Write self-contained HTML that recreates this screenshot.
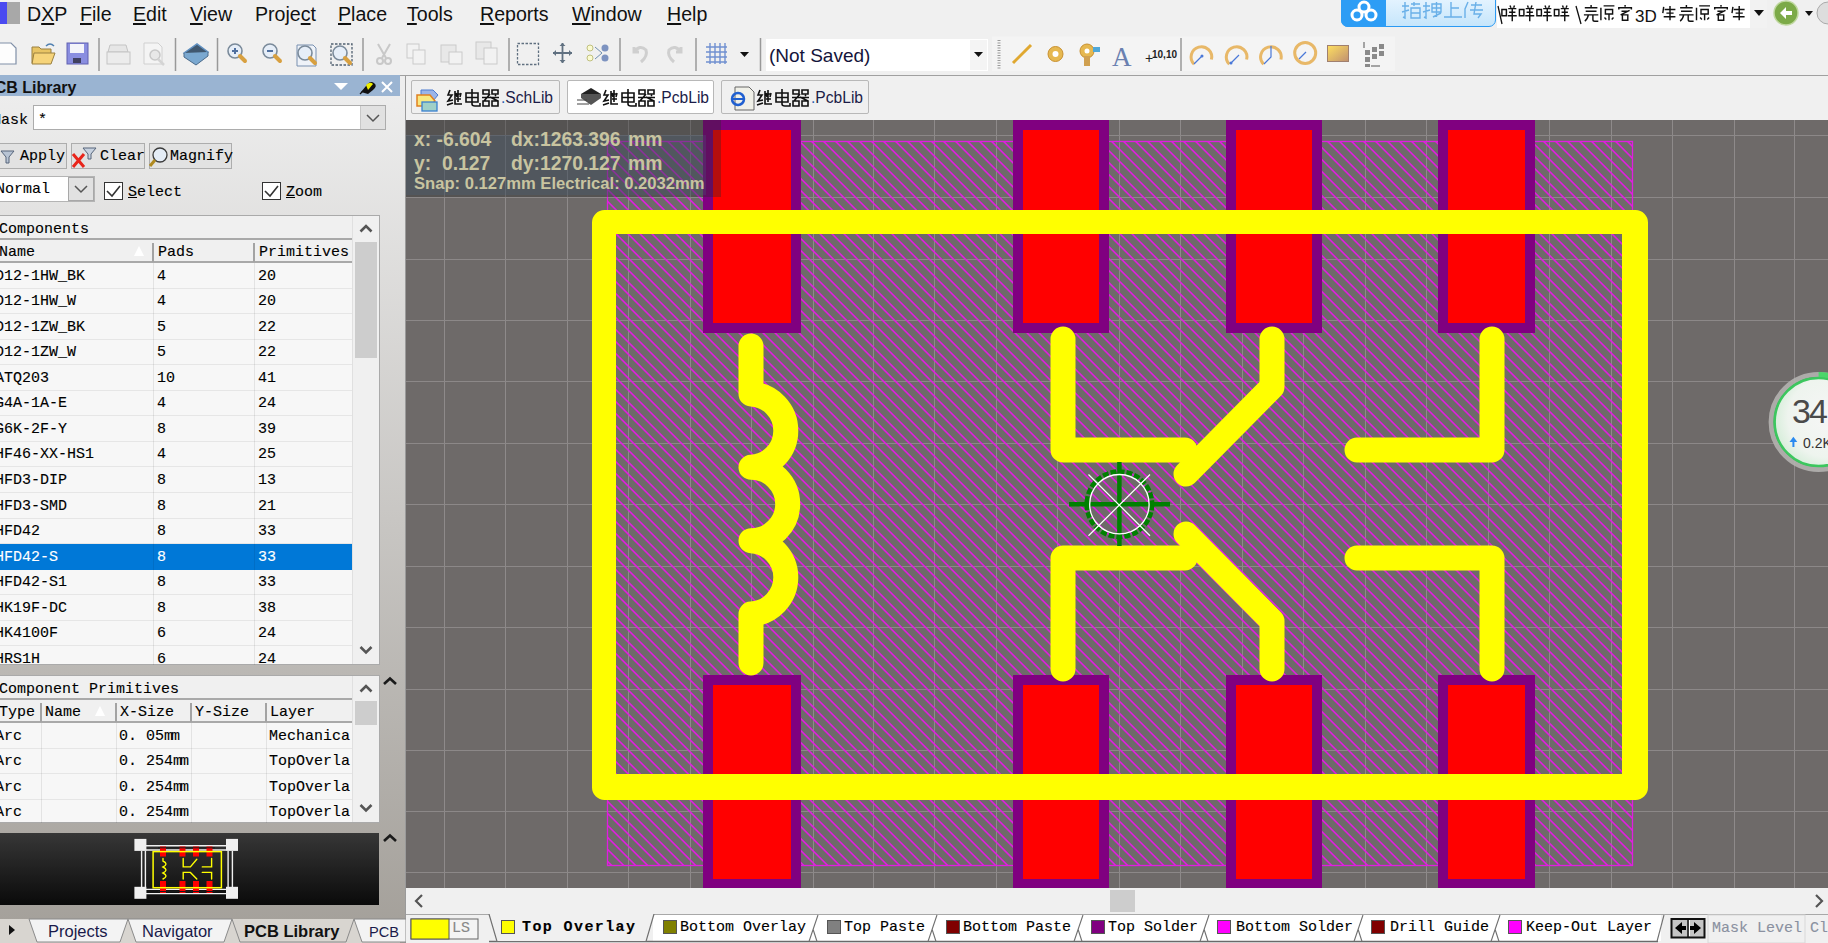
<!DOCTYPE html><html><head><meta charset="utf-8"><title>PCB</title><style>
*{box-sizing:border-box}
body{margin:0;width:1828px;height:943px;overflow:hidden;background:#f0f0f0;position:relative;font-family:"Liberation Sans",sans-serif;color:#000}
.a{position:absolute}
.m{font-family:"Liberation Mono",monospace;font-size:15px;white-space:pre;-webkit-text-stroke:0.12px currentColor}
.s{font-family:"Liberation Sans",sans-serif;white-space:pre}
u{text-decoration:none;border-bottom:1.5px solid #000;}
</style></head><body>
<div class="a" style="left:0;top:2px;width:9px;height:22px;background:#4a4af0"></div>
<div class="a" style="left:7px;top:2px;width:13px;height:22px;background:#a8a8a8"></div>
<div class="a s" style="left:27px;top:3px;font-size:19.6px;line-height:22px;color:#111">D<span style="text-decoration:underline;text-underline-offset:2px;text-decoration-thickness:1.5px">X</span>P</div>
<div class="a s" style="left:80px;top:3px;font-size:19.6px;line-height:22px;color:#111"><span style="text-decoration:underline;text-underline-offset:2px;text-decoration-thickness:1.5px">F</span>ile</div>
<div class="a s" style="left:133px;top:3px;font-size:19.6px;line-height:22px;color:#111"><span style="text-decoration:underline;text-underline-offset:2px;text-decoration-thickness:1.5px">E</span>dit</div>
<div class="a s" style="left:190px;top:3px;font-size:19.6px;line-height:22px;color:#111"><span style="text-decoration:underline;text-underline-offset:2px;text-decoration-thickness:1.5px">V</span>iew</div>
<div class="a s" style="left:255px;top:3px;font-size:19.6px;line-height:22px;color:#111">Proje<span style="text-decoration:underline;text-underline-offset:2px;text-decoration-thickness:1.5px">c</span>t</div>
<div class="a s" style="left:338px;top:3px;font-size:19.6px;line-height:22px;color:#111"><span style="text-decoration:underline;text-underline-offset:2px;text-decoration-thickness:1.5px">P</span>lace</div>
<div class="a s" style="left:407px;top:3px;font-size:19.6px;line-height:22px;color:#111"><span style="text-decoration:underline;text-underline-offset:2px;text-decoration-thickness:1.5px">T</span>ools</div>
<div class="a s" style="left:480px;top:3px;font-size:19.6px;line-height:22px;color:#111"><span style="text-decoration:underline;text-underline-offset:2px;text-decoration-thickness:1.5px">R</span>eports</div>
<div class="a s" style="left:572px;top:3px;font-size:19.6px;line-height:22px;color:#111"><span style="text-decoration:underline;text-underline-offset:2px;text-decoration-thickness:1.5px">W</span>indow</div>
<div class="a s" style="left:667px;top:3px;font-size:19.6px;line-height:22px;color:#111"><span style="text-decoration:underline;text-underline-offset:2px;text-decoration-thickness:1.5px">H</span>elp</div>
<svg class="a" style="left:406px;top:120px" width="1422" height="768" viewBox="406 120 1422 768" shape-rendering="crispEdges"><rect x="406" y="120" width="1422" height="768" fill="#6e6a69"/><rect x="444" y="120" width="1" height="768" fill="#8e8a8a"/><rect x="505" y="120" width="1" height="768" fill="#8e8a8a"/><rect x="567" y="120" width="1" height="768" fill="#8e8a8a"/><rect x="628" y="120" width="1" height="768" fill="#8e8a8a"/><rect x="690" y="120" width="1" height="768" fill="#8e8a8a"/><rect x="751" y="120" width="1" height="768" fill="#8e8a8a"/><rect x="813" y="120" width="1" height="768" fill="#8e8a8a"/><rect x="873" y="120" width="1" height="768" fill="#8e8a8a"/><rect x="934" y="120" width="1" height="768" fill="#8e8a8a"/><rect x="996" y="120" width="1" height="768" fill="#8e8a8a"/><rect x="1057" y="120" width="1" height="768" fill="#8e8a8a"/><rect x="1119" y="120" width="1" height="768" fill="#8e8a8a"/><rect x="1180" y="120" width="1" height="768" fill="#8e8a8a"/><rect x="1242" y="120" width="1" height="768" fill="#8e8a8a"/><rect x="1303" y="120" width="1" height="768" fill="#8e8a8a"/><rect x="1365" y="120" width="1" height="768" fill="#8e8a8a"/><rect x="1426" y="120" width="1" height="768" fill="#8e8a8a"/><rect x="1488" y="120" width="1" height="768" fill="#8e8a8a"/><rect x="1549" y="120" width="1" height="768" fill="#8e8a8a"/><rect x="1611" y="120" width="1" height="768" fill="#8e8a8a"/><rect x="1672" y="120" width="1" height="768" fill="#8e8a8a"/><rect x="1734" y="120" width="1" height="768" fill="#8e8a8a"/><rect x="1794" y="120" width="1" height="768" fill="#8e8a8a"/><rect x="406" y="135" width="1422" height="1" fill="#8c8888"/><rect x="406" y="197" width="1422" height="1" fill="#8c8888"/><rect x="406" y="259" width="1422" height="1" fill="#8c8888"/><rect x="406" y="320" width="1422" height="1" fill="#8c8888"/><rect x="406" y="381" width="1422" height="1" fill="#8c8888"/><rect x="406" y="443" width="1422" height="1" fill="#8c8888"/><rect x="406" y="504" width="1422" height="1" fill="#8c8888"/><rect x="406" y="566" width="1422" height="1" fill="#8c8888"/><rect x="406" y="627" width="1422" height="1" fill="#8c8888"/><rect x="406" y="689" width="1422" height="1" fill="#8c8888"/><rect x="406" y="750" width="1422" height="1" fill="#8c8888"/><rect x="406" y="811" width="1422" height="1" fill="#8c8888"/><rect x="406" y="872" width="1422" height="1" fill="#8c8888"/></svg>
<svg class="a" style="left:406px;top:120px" width="1422" height="768" viewBox="406 120 1422 768"><defs><clipPath id="hc"><rect x="607" y="141" width="1026" height="725"/></clipPath></defs><path clip-path="url(#hc)" d="M-126.80,139L602.20,868M-114.80,139L614.20,868M-102.80,139L626.20,868M-90.80,139L638.20,868M-78.80,139L650.20,868M-66.80,139L662.20,868M-54.80,139L674.20,868M-42.80,139L686.20,868M-30.80,139L698.20,868M-18.80,139L710.20,868M-6.80,139L722.20,868M5.20,139L734.20,868M17.20,139L746.20,868M29.20,139L758.20,868M41.20,139L770.20,868M53.20,139L782.20,868M65.20,139L794.20,868M77.20,139L806.20,868M89.20,139L818.20,868M101.20,139L830.20,868M113.20,139L842.20,868M125.20,139L854.20,868M137.20,139L866.20,868M149.20,139L878.20,868M161.20,139L890.20,868M173.20,139L902.20,868M185.20,139L914.20,868M197.20,139L926.20,868M209.20,139L938.20,868M221.20,139L950.20,868M233.20,139L962.20,868M245.20,139L974.20,868M257.20,139L986.20,868M269.20,139L998.20,868M281.20,139L1010.20,868M293.20,139L1022.20,868M305.20,139L1034.20,868M317.20,139L1046.20,868M329.20,139L1058.20,868M341.20,139L1070.20,868M353.20,139L1082.20,868M365.20,139L1094.20,868M377.20,139L1106.20,868M389.20,139L1118.20,868M401.20,139L1130.20,868M413.20,139L1142.20,868M425.20,139L1154.20,868M437.20,139L1166.20,868M449.20,139L1178.20,868M461.20,139L1190.20,868M473.20,139L1202.20,868M485.20,139L1214.20,868M497.20,139L1226.20,868M509.20,139L1238.20,868M521.20,139L1250.20,868M533.20,139L1262.20,868M545.20,139L1274.20,868M557.20,139L1286.20,868M569.20,139L1298.20,868M581.20,139L1310.20,868M593.20,139L1322.20,868M605.20,139L1334.20,868M617.20,139L1346.20,868M629.20,139L1358.20,868M641.20,139L1370.20,868M653.20,139L1382.20,868M665.20,139L1394.20,868M677.20,139L1406.20,868M689.20,139L1418.20,868M701.20,139L1430.20,868M713.20,139L1442.20,868M725.20,139L1454.20,868M737.20,139L1466.20,868M749.20,139L1478.20,868M761.20,139L1490.20,868M773.20,139L1502.20,868M785.20,139L1514.20,868M797.20,139L1526.20,868M809.20,139L1538.20,868M821.20,139L1550.20,868M833.20,139L1562.20,868M845.20,139L1574.20,868M857.20,139L1586.20,868M869.20,139L1598.20,868M881.20,139L1610.20,868M893.20,139L1622.20,868M905.20,139L1634.20,868M917.20,139L1646.20,868M929.20,139L1658.20,868M941.20,139L1670.20,868M953.20,139L1682.20,868M965.20,139L1694.20,868M977.20,139L1706.20,868M989.20,139L1718.20,868M1001.20,139L1730.20,868M1013.20,139L1742.20,868M1025.20,139L1754.20,868M1037.20,139L1766.20,868M1049.20,139L1778.20,868M1061.20,139L1790.20,868M1073.20,139L1802.20,868M1085.20,139L1814.20,868M1097.20,139L1826.20,868M1109.20,139L1838.20,868M1121.20,139L1850.20,868M1133.20,139L1862.20,868M1145.20,139L1874.20,868M1157.20,139L1886.20,868M1169.20,139L1898.20,868M1181.20,139L1910.20,868M1193.20,139L1922.20,868M1205.20,139L1934.20,868M1217.20,139L1946.20,868M1229.20,139L1958.20,868M1241.20,139L1970.20,868M1253.20,139L1982.20,868M1265.20,139L1994.20,868M1277.20,139L2006.20,868M1289.20,139L2018.20,868M1301.20,139L2030.20,868M1313.20,139L2042.20,868M1325.20,139L2054.20,868M1337.20,139L2066.20,868M1349.20,139L2078.20,868M1361.20,139L2090.20,868M1373.20,139L2102.20,868M1385.20,139L2114.20,868M1397.20,139L2126.20,868M1409.20,139L2138.20,868M1421.20,139L2150.20,868M1433.20,139L2162.20,868M1445.20,139L2174.20,868M1457.20,139L2186.20,868M1469.20,139L2198.20,868M1481.20,139L2210.20,868M1493.20,139L2222.20,868M1505.20,139L2234.20,868M1517.20,139L2246.20,868M1529.20,139L2258.20,868M1541.20,139L2270.20,868M1553.20,139L2282.20,868M1565.20,139L2294.20,868M1577.20,139L2306.20,868M1589.20,139L2318.20,868M1601.20,139L2330.20,868M1613.20,139L2342.20,868M1625.20,139L2354.20,868M1637.20,139L2366.20,868" stroke="#e01ee0" stroke-width="1.6" fill="none"/><rect x="607.5" y="141.5" width="1025" height="724" fill="none" stroke="#e01ee0" stroke-width="1.3"/><rect x="703" y="120" width="98" height="213" fill="#800080"/><rect x="713" y="130" width="78" height="193" fill="#ff0000"/><rect x="703" y="675" width="98" height="214" fill="#800080"/><rect x="713" y="685" width="78" height="194" fill="#ff0000"/><rect x="1013" y="120" width="96" height="213" fill="#800080"/><rect x="1023" y="130" width="76" height="193" fill="#ff0000"/><rect x="1013" y="675" width="96" height="214" fill="#800080"/><rect x="1023" y="685" width="76" height="194" fill="#ff0000"/><rect x="1226" y="120" width="96" height="213" fill="#800080"/><rect x="1236" y="130" width="76" height="193" fill="#ff0000"/><rect x="1226" y="675" width="96" height="214" fill="#800080"/><rect x="1236" y="685" width="76" height="194" fill="#ff0000"/><rect x="1438" y="120" width="97" height="213" fill="#800080"/><rect x="1448" y="130" width="77" height="193" fill="#ff0000"/><rect x="1438" y="675" width="97" height="214" fill="#800080"/><rect x="1448" y="685" width="77" height="194" fill="#ff0000"/><path fill-rule="evenodd" fill="#ffff00" d="M604.5,210H1635.5A12.5,12.5 0 0 1 1648,222.5V787.5A12.5,12.5 0 0 1 1635.5,800H604.5A12.5,12.5 0 0 1 592,787.5V222.5A12.5,12.5 0 0 1 604.5,210ZM616,234H1622V774H616Z"/><path d="M751,346V394A36.7,36.7 0 0 1 751,467.3A36.7,36.7 0 0 1 751,540.7A36.7,36.7 0 0 1 751,614V663" stroke="#ffff00" stroke-width="25" fill="none" stroke-linecap="round" stroke-linejoin="round"/><path d="M1063,339V450H1185" stroke="#ffff00" stroke-width="25" fill="none" stroke-linecap="round" stroke-linejoin="round"/><path d="M1272,339V387L1186,474" stroke="#ffff00" stroke-width="25" fill="none" stroke-linecap="round" stroke-linejoin="round"/><path d="M1063,669V558H1185" stroke="#ffff00" stroke-width="25" fill="none" stroke-linecap="round" stroke-linejoin="round"/><path d="M1272,669V621L1186,534" stroke="#ffff00" stroke-width="25" fill="none" stroke-linecap="round" stroke-linejoin="round"/><path d="M1492,339V450H1357" stroke="#ffff00" stroke-width="25" fill="none" stroke-linecap="round" stroke-linejoin="round"/><path d="M1492,669V558H1357" stroke="#ffff00" stroke-width="25" fill="none" stroke-linecap="round" stroke-linejoin="round"/><circle cx="1119.4" cy="504.2" r="32.5" stroke="#008000" stroke-width="5" fill="none" stroke-dasharray="6 2"/><path d="M1069,504.2H1170M1119.4,462V546" stroke="#008000" stroke-width="4.5"/><circle cx="1119.4" cy="504.2" r="29.7" stroke="#ffffff" stroke-width="1.3" fill="none"/><path d="M1088.5,474.5L1150,535.7M1150,474.5L1088.5,535.7" stroke="#ffffff" stroke-width="1.2"/></svg>
<svg class="a" style="left:1760px;top:364px" width="68" height="116"><defs><radialGradient id="wg" cx="0.6" cy="0.45" r="0.6"><stop offset="0" stop-color="#f6f6f6"/><stop offset="0.75" stop-color="#eef4ee"/><stop offset="1" stop-color="#d8eedb"/></radialGradient></defs><circle cx="58.6" cy="58" r="47.5" fill="none" stroke="#b4b2b0" stroke-width="5" opacity="0.9"/><circle cx="58.6" cy="58" r="44" fill="url(#wg)" stroke="#3cc75e" stroke-width="2.6"/><path d="M58.6,10.5A47.5,47.5 0 0 1 70,11.8" stroke="#4bd66a" stroke-width="5" fill="none"/><text x="32" y="58.5" font-family="Liberation Sans" font-size="34" fill="#4a4a4a" letter-spacing="-2">34</text><path d="M33.4,83V77" stroke="#2a8af0" stroke-width="2"/><path d="M29.5,78L33.4,72.8L37.3,78Z" fill="#2a8af0"/><text x="43" y="84" font-family="Liberation Sans" font-size="14" fill="#333">0.2K</text></svg>
<div class="a" style="left:406px;top:120px;width:315px;height:77px;background:rgba(40,40,40,0.35)"></div>
<div class="a" style="left:406px;top:135px;width:300px;height:60px;background:rgba(70,100,130,0.25)"></div>
<div class="a s" style="left:414px;top:127px;font-size:21px;line-height:24px;color:#c8c4a0;font-weight:bold;transform:scaleX(0.92);transform-origin:0 0">x: -6.604</div>
<div class="a s" style="left:511px;top:127px;font-size:21px;line-height:24px;color:#c8c4a0;font-weight:bold;transform:scaleX(0.92);transform-origin:0 0">dx:1263.396</div>
<div class="a s" style="left:628px;top:127px;font-size:21px;line-height:24px;color:#c8c4a0;font-weight:bold;transform:scaleX(0.92);transform-origin:0 0">mm</div>
<div class="a s" style="left:414px;top:151px;font-size:21px;line-height:24px;color:#c8c4a0;font-weight:bold;transform:scaleX(0.92);transform-origin:0 0">y:  0.127</div>
<div class="a s" style="left:511px;top:151px;font-size:21px;line-height:24px;color:#c8c4a0;font-weight:bold;transform:scaleX(0.92);transform-origin:0 0">dy:1270.127</div>
<div class="a s" style="left:628px;top:151px;font-size:21px;line-height:24px;color:#c8c4a0;font-weight:bold;transform:scaleX(0.92);transform-origin:0 0">mm</div>
<div class="a s" style="left:414px;top:174px;font-size:16.6px;line-height:19px;color:#c8c4a0;font-weight:bold;">Snap: 0.127mm Electrical: 0.2032mm</div>
<svg class="a" style="left:0;top:34px" width="1400" height="42" viewBox="0 34 1400 42"><rect x="992" y="36.5" width="403" height="34.5" fill="#f4f4f4"/><rect x="98.25" y="38" width="1.5" height="33" fill="#999999"/><rect x="174.75" y="38" width="1.5" height="33" fill="#999999"/><rect x="216.75" y="38" width="1.5" height="33" fill="#999999"/><rect x="362.25" y="38" width="1.5" height="33" fill="#999999"/><rect x="508.25" y="38" width="1.5" height="33" fill="#999999"/><rect x="619.25" y="38" width="1.5" height="33" fill="#999999"/><rect x="695.25" y="38" width="1.5" height="33" fill="#999999"/><rect x="759.75" y="38" width="1.5" height="33" fill="#999999"/><rect x="1180.25" y="38" width="1.5" height="33" fill="#999999"/><path d="M999,40V70" stroke="#9a9a9a" stroke-width="3" stroke-dasharray="1 1.5"/><path d="M-2,43H11L16,48V64H-2Z" fill="#fdfdfd" stroke="#8090a8" stroke-width="1.2"/><path d="M32,47H39L41,49H51V63H32Z" fill="#e8c464" stroke="#9a8040" stroke-width="1"/><path d="M34,53H55L51,64H32Z" fill="#f6d47a" stroke="#9a8040" stroke-width="1"/><path d="M46,46Q50,42 54,46" stroke="#5080b0" stroke-width="1.5" fill="none"/><rect x="67" y="43" width="21" height="21" fill="#8a8ee0" stroke="#6060b0" stroke-width="1"/><rect x="70" y="44" width="14" height="9" fill="#f4f4fa"/><rect x="73" y="58" width="8" height="5" fill="#404060"/><path d="M110,45H126L128,52H108Z" fill="#e6e6e6" stroke="#c4c4c4"/><rect x="107" y="52" width="23" height="12" fill="#ececec" stroke="#c4c4c4"/><path d="M144,43H158L162,47V64H144Z" fill="#f4f4f4" stroke="#d0d0d0"/><circle cx="155" cy="55" r="5" fill="#e8e8e8" stroke="#c8c8c8" stroke-width="1.5"/><path d="M158,59L164,65" stroke="#d4d4d4" stroke-width="2.5"/><path d="M184,53L197,44L208,52L196,62Z" fill="#405870" stroke="#6090c0" stroke-width="1.5"/><path d="M184,53V57L196,65L208,56V52" fill="#7aa8d0" stroke="#4a6a8a" stroke-width="1"/><circle cx="235" cy="51" r="7" fill="#e6eef8" stroke="#7a8a9a" stroke-width="1.6"/><path d="M240,56L245,61" stroke="#d8a040" stroke-width="4" stroke-linecap="round"/><path d="M232,51H238M235,48V54" stroke="#5070a0" stroke-width="2"/><circle cx="270" cy="51" r="7" fill="#e6eef8" stroke="#7a8a9a" stroke-width="1.6"/><path d="M275,56L280,61" stroke="#d8a040" stroke-width="4" stroke-linecap="round"/><path d="M267,51H273" stroke="#5070a0" stroke-width="2"/><path d="M297,45H313L316,48V66H297Z" fill="#eef2f8" stroke="#7890b0" stroke-width="1"/><circle cx="305" cy="53" r="7" fill="#e6eef8" stroke="#7a8a9a" stroke-width="1.6"/><path d="M310,58L315,63" stroke="#d8a040" stroke-width="4" stroke-linecap="round"/><rect x="331" y="44" width="21" height="21" fill="none" stroke="#506070" stroke-width="1.3" stroke-dasharray="2.5 1.5"/><circle cx="340" cy="53" r="7" fill="#e6eef8" stroke="#7a8a9a" stroke-width="1.6"/><path d="M345,58L350,63" stroke="#d8a040" stroke-width="4" stroke-linecap="round"/><path d="M378,44L386,58M390,44L382,58" stroke="#c8c8c8" stroke-width="2"/><circle cx="380" cy="61" r="3" fill="none" stroke="#c8c8c8" stroke-width="2"/><circle cx="388" cy="61" r="3" fill="none" stroke="#c8c8c8" stroke-width="2"/><rect x="407" y="44" width="12" height="14" fill="#f2f2f2" stroke="#cacaca"/><rect x="413" y="50" width="12" height="14" fill="#f2f2f2" stroke="#cacaca"/><rect x="441" y="45" width="15" height="17" fill="#e8e8e8" stroke="#cacaca"/><rect x="449" y="52" width="13" height="12" fill="#f2f2f2" stroke="#cacaca"/><rect x="476" y="42" width="15" height="17" fill="#e8e8e8" stroke="#cacaca"/><rect x="484" y="48" width="13" height="16" fill="#f2f2f2" stroke="#cacaca"/><rect x="517.5" y="43.5" width="21" height="21" fill="none" stroke="#607080" stroke-width="1.3" stroke-dasharray="2.5 1.5"/><path d="M553,53H572M562.5,43V63" stroke="#607080" stroke-width="1.8"/><path d="M553,53L556,50V56ZM572,53L569,50V56ZM562.5,43L559.5,46H565.5ZM562.5,63L559.5,60H565.5Z" fill="#607080"/><path d="M595,47L602,53L595,59" stroke="#7090b0" stroke-width="1" fill="none"/><circle cx="590" cy="48" r="3" fill="#fafad0" stroke="#c0c080"/><circle cx="590" cy="58" r="3" fill="#fafad0" stroke="#c0c080"/><circle cx="605" cy="48" r="3.5" fill="#7d93c0"/><circle cx="605" cy="58" r="3.5" fill="#7d93c0"/><path d="M634,47V52H639M634,52Q640,44 646,50Q648,56 641,62" stroke="#cfcfcf" stroke-width="3" fill="none"/><path d="M681,47V52H676M681,52Q675,44 669,50Q667,56 674,62" stroke="#cfcfcf" stroke-width="3" fill="none"/><path d="M706,47H727M706,52H727M706,57H727M706,62H727M710,43V64M715,43V64M720,43V64M725,43V64" stroke="#7090d0" stroke-width="1.4"/><path d="M740,52H749L744.5,57Z" fill="#111"/><rect x="766" y="39" width="222" height="32" fill="#fff"/><rect x="970" y="40" width="17" height="30" fill="#f4f4f4"/><path d="M974,52H983L978.5,57Z" fill="#111"/><path d="M1013,63L1031,45" stroke="#e0a830" stroke-width="3"/><circle cx="1055.5" cy="54" r="7.5" fill="#e6b850" stroke="#c89030" stroke-width="1"/><circle cx="1055.5" cy="54" r="3" fill="#fff"/><circle cx="1087" cy="51" r="7" fill="#e6b850" stroke="#c89030" stroke-width="1"/><circle cx="1087" cy="51" r="2.5" fill="#fff"/><rect x="1084" y="56" width="6" height="10" fill="#d0a050"/><rect x="1093" y="47" width="7" height="5" fill="#50a8d8"/><text x="1112" y="66" font-family="Liberation Serif" font-size="27" fill="#6a80b0">A</text><text x="1145" y="63" font-family="Liberation Sans" font-size="14" fill="#222">+</text><text x="1152" y="58" font-family="Liberation Sans" font-size="10" font-weight="bold" fill="#222">10,10</text><path d="M1194.1000000000001,64.3A10.3,10.3 0 1 1 1211.4,59.5" stroke="#e8b868" stroke-width="3" fill="none"/><path d="M1229.3,64.3A10.3,10.3 0 1 1 1246.6,59.5" stroke="#e8b868" stroke-width="3" fill="none"/><path d="M1263.6000000000001,64.3A10.3,10.3 0 1 1 1280.9,59.5" stroke="#e8b868" stroke-width="3" fill="none"/><path d="M1194,64L1202,56M1231,63L1239,55M1264,64L1271,57V46" stroke="#4a78d8" stroke-width="1.2" fill="none"/><circle cx="1202" cy="56" r="1.5" fill="#4a78d8"/><circle cx="1231" cy="63" r="1.5" fill="#4a78d8"/><circle cx="1305.2" cy="53" r="10.5" stroke="#e8b868" stroke-width="3" fill="none"/><path d="M1299,59L1306,52" stroke="#4a78d8" stroke-width="1.2"/><defs><linearGradient id="rg" x1="0" y1="0" x2="1" y2="1"><stop offset="0" stop-color="#ffe060"/><stop offset="1" stop-color="#c09070"/></linearGradient></defs><rect x="1327.5" y="45.5" width="21" height="16" fill="url(#rg)" stroke="#a08070" stroke-width="1"/><g fill="#8a8a8a"><rect x="1365" y="50" width="5" height="5"/><rect x="1372" y="47" width="5" height="5"/><rect x="1379" y="44" width="5" height="5"/><rect x="1365" y="57" width="5" height="5"/><rect x="1372" y="54" width="5" height="5"/><rect x="1379" y="51" width="5" height="5"/><rect x="1365" y="64" width="5" height="3"/></g><path d="M1364,42V48M1371,66H1380" stroke="#555" stroke-width="1"/></svg>
<div class="a s" style="left:769px;top:45px;font-size:19px;line-height:22px;color:#14143a">(Not Saved)</div>
<div class="a" style="left:411px;top:80px;width:149px;height:34px;background:#f0f0f0;border:1px solid #b8b8b8;border-radius:2px"></div>
<div class="a" style="left:567px;top:80px;width:147px;height:34px;background:#ffffff;border:1px solid #b8b8b8;border-radius:2px"></div>
<div class="a" style="left:721px;top:80px;width:148px;height:34px;background:#f0f0f0;border:1px solid #b8b8b8;border-radius:2px"></div>
<svg class="a" style="left:411px;top:80px" width="460" height="34"><path d="M10,10H22L27,15L22,21H10Z" fill="#9ab4e8" stroke="#4a7ad0"/><path d="M6,15H19L24,21L19,26H6Z" fill="#f8e880" stroke="#e08020" stroke-width="1.5"/><rect x="11" y="22" width="15" height="9" fill="#a0d0c8" stroke="#3a80d0" stroke-width="1.3"/><path d="M170,14L180,8L190,14L180,20Z" fill="#222"/><path d="M170,14V18L180,25L190,18V14" fill="#555"/><path d="M166,20H176M166,24H178" stroke="#444" stroke-width="1"/><path d="M324,7H338L343,12V30H324Z" fill="#f0f0e8" stroke="#666"/><circle cx="327" cy="19" r="6" fill="none" stroke="#2060d0" stroke-width="2.5"/><path d="M320,19H334" stroke="#2060d0" stroke-width="2"/></svg>
<svg class="a" style="left:440px;top:88px" width="440" height="22"><g transform="translate(7,1) scale(1.0)" stroke="#111" stroke-width="1.6" fill="none"><path d="M3,1L1,6L5,6L1,12L6,11M0,16L6,14M8,2V15H15M9,5L14,5M11,1V13M9,10L14,10M9,4L10,8M14,4L13,8"/><path d="M19,4H31V13H19ZM19,8.5H31M25,0V15Q25,17 28,17H33V14"/><path d="M36,1H42V5H36ZM45,1H51V5H45ZM36,12H42V17H36ZM45,12H51V17H45ZM35,8.5H52M43,5L37,12M43,8L51,12M48,6L49,7"/></g><g transform="translate(163,1) scale(1.0)" stroke="#111" stroke-width="1.6" fill="none"><path d="M3,1L1,6L5,6L1,12L6,11M0,16L6,14M8,2V15H15M9,5L14,5M11,1V13M9,10L14,10M9,4L10,8M14,4L13,8"/><path d="M19,4H31V13H19ZM19,8.5H31M25,0V15Q25,17 28,17H33V14"/><path d="M36,1H42V5H36ZM45,1H51V5H45ZM36,12H42V17H36ZM45,12H51V17H45ZM35,8.5H52M43,5L37,12M43,8L51,12M48,6L49,7"/></g><g transform="translate(317,1) scale(1.0)" stroke="#111" stroke-width="1.6" fill="none"><path d="M3,1L1,6L5,6L1,12L6,11M0,16L6,14M8,2V15H15M9,5L14,5M11,1V13M9,10L14,10M9,4L10,8M14,4L13,8"/><path d="M19,4H31V13H19ZM19,8.5H31M25,0V15Q25,17 28,17H33V14"/><path d="M36,1H42V5H36ZM45,1H51V5H45ZM36,12H42V17H36ZM45,12H51V17H45ZM35,8.5H52M43,5L37,12M43,8L51,12M48,6L49,7"/></g></svg>
<div class="a s" style="left:501px;top:88px;font-size:15.6px;line-height:20px;color:#1c1c48"><span style="color:#2a5db0">.</span>SchLib</div>
<div class="a s" style="left:657px;top:88px;font-size:15.6px;line-height:20px;color:#1c1c48"><span style="color:#2a5db0">.</span>PcbLib</div>
<div class="a s" style="left:811px;top:88px;font-size:15.6px;line-height:20px;color:#1c1c48"><span style="color:#2a5db0">.</span>PcbLib</div>
<div class="a" style="left:1497px;top:0;width:270px;height:28px;background:#fff"></div>
<div class="a" style="left:1341px;top:-4px;width:155px;height:31px;background:linear-gradient(#e6f4ff,#c6e6fb);border:1.5px solid #2b9af3;border-radius:0 0 7px 7px"></div>
<div class="a" style="left:1341px;top:-4px;width:45px;height:31px;background:#2d9df5;border-radius:0 0 0 7px"></div>
<svg class="a" style="left:1346px;top:0" width="36" height="24"><circle cx="18" cy="7" r="5" fill="none" stroke="#fff" stroke-width="3"/><circle cx="11" cy="15" r="5" fill="none" stroke="#fff" stroke-width="3"/><circle cx="25" cy="15" r="5" fill="none" stroke="#fff" stroke-width="3"/></svg>
<svg class="a" style="left:1400px;top:0" width="90" height="24"><g stroke="#6ab0e8" stroke-width="1.4" fill="none"><path d="M2,6H9M5,2V18L3,17M2,12L9,10M11,4H20M14,2V6M11,8H20V18H11ZM11,13H20"/><path d="M23,6H30M26,2V18L24,17M23,12L30,10M32,4H41V12H32ZM36.5,2V17M32,8H41M33,17L41,13"/><path d="M51,2V17M51,8H59M44,17H62"/><path d="M68,2L65,9V18M71,5H82M70,10H83M76,2L74,14H81L78,18"/></g></svg>
<div class="a" style="left:1750px;top:0;width:17px;height:28px;background:#f2f2f2"></div>
<svg class="a" style="left:1497px;top:0" width="270" height="28" viewBox="1497 0 270 28"><path d="M1498,6L1502,24M1576,6L1581,24" stroke="#111" stroke-width="1.3"/><g transform="translate(1501.0,5) scale(0.9)" stroke="#111" stroke-width="1.6" fill="none"><path d="M1,5H6V12H1ZM8,4H17M9,8H16M7.5,12H17.5M12.5,3V18M10,0.5L11,3M15,0.5L14,3"/></g><g transform="translate(1518.5,5) scale(0.9)" stroke="#111" stroke-width="1.6" fill="none"><path d="M1,5H6V12H1ZM8,4H17M9,8H16M7.5,12H17.5M12.5,3V18M10,0.5L11,3M15,0.5L14,3"/></g><g transform="translate(1536.0,5) scale(0.9)" stroke="#111" stroke-width="1.6" fill="none"><path d="M1,5H6V12H1ZM8,4H17M9,8H16M7.5,12H17.5M12.5,3V18M10,0.5L11,3M15,0.5L14,3"/></g><g transform="translate(1553.5,5) scale(0.9)" stroke="#111" stroke-width="1.6" fill="none"><path d="M1,5H6V12H1ZM8,4H17M9,8H16M7.5,12H17.5M12.5,3V18M10,0.5L11,3M15,0.5L14,3"/></g><g transform="translate(1583,5) scale(0.9)" stroke="#111" stroke-width="1.6" fill="none"><path d="M2,3H16M9,0V3M3,7H15M1,11H17M6,11Q5,16 2,18M11,11V16Q11,18 13,18H17"/></g><g transform="translate(1600,5) scale(0.9)" stroke="#111" stroke-width="1.6" fill="none"><path d="M1,3V17M4,1H16M6,5H14V10H6ZM10,10V17M5,14L7,16M15,14L13,16"/></g><g transform="translate(1617,5) scale(0.9)" stroke="#111" stroke-width="1.6" fill="none"><path d="M9,0V2M2,5V3H16V5M5,7H13M4,11L14,6M6,11H12V17H6Z"/></g><text x="1635" y="22" font-family="Liberation Sans" font-size="17" fill="#111">3D</text><g transform="translate(1661.0,5) scale(0.9)" stroke="#111" stroke-width="1.6" fill="none"><path d="M3,2L2,9M4,5H16M6,9H14M10,1V17M3,13H16"/></g><g transform="translate(1678.3,5) scale(0.9)" stroke="#111" stroke-width="1.6" fill="none"><path d="M2,3H16M9,0V3M3,7H15M1,11H17M6,11Q5,16 2,18M11,11V16Q11,18 13,18H17"/></g><g transform="translate(1695.6,5) scale(0.9)" stroke="#111" stroke-width="1.6" fill="none"><path d="M1,3V17M4,1H16M6,5H14V10H6ZM10,10V17M5,14L7,16M15,14L13,16"/></g><g transform="translate(1712.9,5) scale(0.9)" stroke="#111" stroke-width="1.6" fill="none"><path d="M9,0V2M2,5V3H16V5M5,7H13M4,11L14,6M6,11H12V17H6Z"/></g><g transform="translate(1730.2,5) scale(0.9)" stroke="#111" stroke-width="1.6" fill="none"><path d="M3,2L2,9M4,5H16M6,9H14M10,1V17M3,13H16"/></g><path d="M1754,10H1764L1759,16Z" fill="#111"/></svg>
<svg class="a" style="left:1768px;top:0" width="60" height="28"><circle cx="18" cy="13" r="12" fill="#7caa48" stroke="#c0d8a0" stroke-width="1.5"/><path d="M12,13L18,7V11H24V15H18V19Z" fill="#fff"/><path d="M37,11H45L41,16Z" fill="#111"/><circle cx="60" cy="13" r="11" fill="#ddd" stroke="#aaa"/></svg>
<div class="a" style="left:406px;top:888px;width:1422px;height:26px;background:#f0f0f0"></div>
<svg class="a" style="left:410px;top:892px" width="20" height="18"><path d="M12,3L6,9L12,15" stroke="#555" stroke-width="2.2" fill="none"/></svg>
<svg class="a" style="left:1808px;top:892px" width="20" height="18"><path d="M8,3L14,9L8,15" stroke="#555" stroke-width="2.2" fill="none"/></svg>
<div class="a" style="left:1110px;top:890px;width:25px;height:22px;background:#cdcdcd"></div>
<div class="a" style="left:406px;top:914px;width:1422px;height:29px;background:#f0f0f0"></div>
<svg class="a" style="left:406px;top:914px" width="1422" height="29" viewBox="406 914 1422 29"><rect x="653" y="915" width="1008" height="26" fill="#ffffff"/><path d="M406,914.5H489M653,914.5H1828" stroke="#a8a8a8" stroke-width="1"/><path d="M489,941.5H1658" stroke="#6a6a6a" stroke-width="1.5"/><path d="M489,914L497,941.5H646L654,914" fill="#f0f0f0" stroke="#707070" stroke-width="1.2"/><path d="M809,941.5L818,915M813,929L817,941.5" stroke="#707070" stroke-width="1.1" fill="none"/><path d="M928,941.5L937,915M932,929L936,941.5" stroke="#707070" stroke-width="1.1" fill="none"/><path d="M1074,941.5L1083,915M1078,929L1082,941.5" stroke="#707070" stroke-width="1.1" fill="none"/><path d="M1200,941.5L1209,915M1204,929L1208,941.5" stroke="#707070" stroke-width="1.1" fill="none"/><path d="M1354,941.5L1363,915M1358,929L1362,941.5" stroke="#707070" stroke-width="1.1" fill="none"/><path d="M1491,941.5L1500,915M1495,929L1499,941.5" stroke="#707070" stroke-width="1.1" fill="none"/><path d="M1657,941.5L1664,915" stroke="#707070" stroke-width="1.1" fill="none"/><rect x="411" y="919" width="67" height="20" fill="#f4f4f4" stroke="#666" stroke-width="1"/><rect x="411" y="919" width="38" height="20" fill="#ffff00" stroke="#555" stroke-width="1"/><rect x="501.5" y="920.5" width="13" height="13" fill="#ffff00" stroke="#555" stroke-width="1"/><rect x="663.5" y="920.5" width="13" height="13" fill="#808000" stroke="#555" stroke-width="1"/><rect x="827.5" y="920.5" width="13" height="13" fill="#808080" stroke="#555" stroke-width="1"/><rect x="946.5" y="920.5" width="13" height="13" fill="#800000" stroke="#555" stroke-width="1"/><rect x="1091.5" y="920.5" width="13" height="13" fill="#800080" stroke="#555" stroke-width="1"/><rect x="1217.5" y="920.5" width="13" height="13" fill="#ff00ff" stroke="#555" stroke-width="1"/><rect x="1371.5" y="920.5" width="13" height="13" fill="#800000" stroke="#555" stroke-width="1"/><rect x="1508.5" y="920.5" width="13" height="13" fill="#ff00ff" stroke="#555" stroke-width="1"/><rect x="1708" y="915" width="97" height="28" fill="#f0f0f0" stroke="#d8d8d8" stroke-width="1"/><rect x="1671.5" y="919" width="33" height="18.5" fill="#c4c4c4" stroke="#111" stroke-width="2"/><path d="M1688,919V937" stroke="#111" stroke-width="1.5"/><path d="M1689.5,920V936" stroke="#fff" stroke-width="1"/><path d="M1675,928L1682,922V926H1686V930H1682V934ZM1701,928L1694,922V926H1690V930H1694V934Z" fill="#000"/></svg>
<div class="a m" style="left:452px;top:920px;line-height:17px;color:#888">LS</div>
<div class="a m" style="left:522px;top:919px;line-height:17px;font-weight:bold;letter-spacing:1.4px">Top Overlay</div>
<div class="a m" style="left:680px;top:919px;line-height:17px">Bottom Overlay</div>
<div class="a m" style="left:844px;top:919px;line-height:17px">Top Paste</div>
<div class="a m" style="left:963px;top:919px;line-height:17px">Bottom Paste</div>
<div class="a m" style="left:1108px;top:919px;line-height:17px">Top Solder</div>
<div class="a m" style="left:1236px;top:919px;line-height:17px">Bottom Solder</div>
<div class="a m" style="left:1390px;top:919px;line-height:17px">Drill Guide</div>
<div class="a m" style="left:1526px;top:919px;line-height:17px">Keep-Out Layer</div>
<div class="a m" style="left:1712px;top:920px;line-height:17px;color:#8a90a0">Mask Level</div>
<div class="a m" style="left:1810px;top:920px;line-height:17px;color:#8a90a0">Cl</div>
<div class="a" style="left:400px;top:75px;width:1428px;height:1px;background:#a0a0a0"></div>
<div class="a" style="left:0;top:96px;width:405px;height:847px;background:linear-gradient(#ededed,#a39f99)"></div>
<div class="a" style="left:400px;top:76px;width:5px;height:20px;background:#eeeeee"></div>
<div class="a" style="left:405px;top:76px;width:1px;height:867px;background:#9a9a9a"></div>
<div class="a" style="left:0;top:75px;width:400px;height:21px;background:#9ab4d2"></div>
<div class="a s" style="left:-16px;top:78px;font-size:16px;font-weight:bold;line-height:20px;color:#111">PCB Library</div>
<svg class="a" style="left:330px;top:79px" width="70" height="16"><path d="M4,4H18L11,11Z" fill="#fff"/><path d="M31,13L36,7Q40,1 44,4Q48,7 43,11L38,15Z" fill="#111"/><path d="M36,6Q40,2 43,5L38,11Z" fill="#ee0"/><path d="M30,15L33,12" stroke="#111" stroke-width="1.2"/><path d="M52,3L62,13M62,3L52,13" stroke="#fff" stroke-width="2"/></svg>
<div class="a m" style="left:-8px;top:112px;line-height:17px">Mask</div>
<div class="a" style="left:33px;top:105px;width:353px;height:25px;background:#fff;border:1px solid #acacac"></div>
<div class="a" style="left:360px;top:106px;width:25px;height:23px;background:#e1e1e1;border-left:1px solid #c8c8c8"></div>
<svg class="a" style="left:365px;top:113px" width="16" height="10"><path d="M2,2L8,8L14,2" stroke="#555" stroke-width="1.5" fill="none"/></svg>
<div class="a m" style="left:38px;top:112px;line-height:17px">*</div>
<div class="a" style="left:-4px;top:143px;width:71px;height:26px;background:#e2e2e2;border:1px solid #adadad"></div>
<div class="a m" style="left:20px;top:148px;line-height:17px">Apply</div>
<div class="a" style="left:71px;top:143px;width:74px;height:26px;background:#e2e2e2;border:1px solid #adadad"></div>
<div class="a m" style="left:100px;top:148px;line-height:17px">Clear</div>
<div class="a" style="left:149px;top:143px;width:83px;height:26px;background:#e2e2e2;border:1px solid #adadad"></div>
<div class="a m" style="left:170px;top:148px;line-height:17px">Magnify</div>
<svg class="a" style="left:0;top:145px" width="240" height="24"><path d="M1,6H14L9,12V18H6V12Z" fill="#b8c4d4" stroke="#56657a" stroke-width="1"/><path d="M73,9L84,22M84,9L73,22" stroke="#e8251b" stroke-width="3"/><path d="M83,3H96L91,9V14H88V9Z" fill="#c8d2e0" stroke="#56657a" stroke-width="1"/><circle cx="160" cy="10" r="7" fill="#e4ecf6" stroke="#3a3a3a" stroke-width="1.3"/><path d="M155,15L150,21" stroke="#b08a20" stroke-width="3"/></svg>
<div class="a" style="left:-2px;top:176px;width:97px;height:26px;background:#fff;border:1px solid #b4b4b4"></div>
<div class="a" style="left:68px;top:177px;width:26px;height:24px;background:#e1e1e1;border:1px solid #a8a8a8"></div>
<svg class="a" style="left:73px;top:184px" width="16" height="10"><path d="M2,2L8,8L14,2" stroke="#555" stroke-width="1.5" fill="none"/></svg>
<div class="a m" style="left:-4px;top:181px;line-height:17px">Normal</div>
<div class="a" style="left:104px;top:182px;width:19px;height:18px;background:#fff;border:1.5px solid #333"></div>
<svg class="a" style="left:104px;top:182px" width="19" height="18"><path d="M3,9L8,14L16,4" stroke="#333" stroke-width="1.6" fill="none"/></svg>
<div class="a m" style="left:128px;top:184px;line-height:17px"><span style="text-decoration:underline">S</span>elect</div>
<div class="a" style="left:262px;top:182px;width:19px;height:18px;background:#fff;border:1.5px solid #333"></div>
<svg class="a" style="left:262px;top:182px" width="19" height="18"><path d="M3,9L8,14L16,4" stroke="#333" stroke-width="1.6" fill="none"/></svg>
<div class="a m" style="left:286px;top:184px;line-height:17px"><span style="text-decoration:underline">Z</span>oom</div>
<div class="a" style="left:-2px;top:215px;width:382px;height:450px;background:#f7f7f7;border:1px solid #aaaaaa"></div>
<div class="a" style="left:-2px;top:216px;width:355px;height:24px;background:#f0f0f0;border-bottom:2px solid #a9a9a9"></div>
<div class="a m" style="left:-1px;top:221px;line-height:17px">Components</div>
<div class="a" style="left:-2px;top:240px;width:355px;height:23px;background:#f0f0f0;border-bottom:2px solid #a9a9a9"></div>
<div class="a m" style="left:-1px;top:244px;line-height:17px">Name</div>
<div class="a" style="left:152px;top:243px;width:2px;height:19px;background:#a3a3a3"></div>
<div class="a m" style="left:158px;top:244px;line-height:17px">Pads</div>
<div class="a" style="left:253px;top:243px;width:2px;height:19px;background:#a3a3a3"></div>
<div class="a m" style="left:259px;top:244px;line-height:17px">Primitives</div>
<div class="a" style="left:-2px;top:287.6px;width:355px;height:1px;background:#e6e6e6"></div>
<div class="a m" style="left:-5px;top:267.5px;line-height:17px;color:#000">D12-1HW_BK</div>
<div class="a m" style="left:157px;top:267.5px;line-height:17px;color:#000">4</div>
<div class="a m" style="left:258px;top:267.5px;line-height:17px;color:#000">20</div>
<div class="a" style="left:-2px;top:313.1px;width:355px;height:1px;background:#e6e6e6"></div>
<div class="a m" style="left:-5px;top:293.1px;line-height:17px;color:#000">D12-1HW_W</div>
<div class="a m" style="left:157px;top:293.1px;line-height:17px;color:#000">4</div>
<div class="a m" style="left:258px;top:293.1px;line-height:17px;color:#000">20</div>
<div class="a" style="left:-2px;top:338.7px;width:355px;height:1px;background:#e6e6e6"></div>
<div class="a m" style="left:-5px;top:318.6px;line-height:17px;color:#000">D12-1ZW_BK</div>
<div class="a m" style="left:157px;top:318.6px;line-height:17px;color:#000">5</div>
<div class="a m" style="left:258px;top:318.6px;line-height:17px;color:#000">22</div>
<div class="a" style="left:-2px;top:364.2px;width:355px;height:1px;background:#e6e6e6"></div>
<div class="a m" style="left:-5px;top:344.1px;line-height:17px;color:#000">D12-1ZW_W</div>
<div class="a m" style="left:157px;top:344.1px;line-height:17px;color:#000">5</div>
<div class="a m" style="left:258px;top:344.1px;line-height:17px;color:#000">22</div>
<div class="a" style="left:-2px;top:389.8px;width:355px;height:1px;background:#e6e6e6"></div>
<div class="a m" style="left:-5px;top:369.7px;line-height:17px;color:#000">ATQ203</div>
<div class="a m" style="left:157px;top:369.7px;line-height:17px;color:#000">10</div>
<div class="a m" style="left:258px;top:369.7px;line-height:17px;color:#000">41</div>
<div class="a" style="left:-2px;top:415.3px;width:355px;height:1px;background:#e6e6e6"></div>
<div class="a m" style="left:-5px;top:395.2px;line-height:17px;color:#000">G4A-1A-E</div>
<div class="a m" style="left:157px;top:395.2px;line-height:17px;color:#000">4</div>
<div class="a m" style="left:258px;top:395.2px;line-height:17px;color:#000">24</div>
<div class="a" style="left:-2px;top:440.9px;width:355px;height:1px;background:#e6e6e6"></div>
<div class="a m" style="left:-5px;top:420.8px;line-height:17px;color:#000">G6K-2F-Y</div>
<div class="a m" style="left:157px;top:420.8px;line-height:17px;color:#000">8</div>
<div class="a m" style="left:258px;top:420.8px;line-height:17px;color:#000">39</div>
<div class="a" style="left:-2px;top:466.4px;width:355px;height:1px;background:#e6e6e6"></div>
<div class="a m" style="left:-5px;top:446.4px;line-height:17px;color:#000">HF46-XX-HS1</div>
<div class="a m" style="left:157px;top:446.4px;line-height:17px;color:#000">4</div>
<div class="a m" style="left:258px;top:446.4px;line-height:17px;color:#000">25</div>
<div class="a" style="left:-2px;top:491.9px;width:355px;height:1px;background:#e6e6e6"></div>
<div class="a m" style="left:-5px;top:471.9px;line-height:17px;color:#000">HFD3-DIP</div>
<div class="a m" style="left:157px;top:471.9px;line-height:17px;color:#000">8</div>
<div class="a m" style="left:258px;top:471.9px;line-height:17px;color:#000">13</div>
<div class="a" style="left:-2px;top:517.5px;width:355px;height:1px;background:#e6e6e6"></div>
<div class="a m" style="left:-5px;top:497.5px;line-height:17px;color:#000">HFD3-SMD</div>
<div class="a m" style="left:157px;top:497.5px;line-height:17px;color:#000">8</div>
<div class="a m" style="left:258px;top:497.5px;line-height:17px;color:#000">21</div>
<div class="a" style="left:-2px;top:543.0px;width:355px;height:1px;background:#e6e6e6"></div>
<div class="a m" style="left:-5px;top:523.0px;line-height:17px;color:#000">HFD42</div>
<div class="a m" style="left:157px;top:523.0px;line-height:17px;color:#000">8</div>
<div class="a m" style="left:258px;top:523.0px;line-height:17px;color:#000">33</div>
<div class="a" style="left:-2px;top:544.0px;width:355px;height:25.6px;background:#0078d7"></div>
<div class="a m" style="left:-5px;top:548.5px;line-height:17px;color:#fff">HFD42-S</div>
<div class="a m" style="left:157px;top:548.5px;line-height:17px;color:#fff">8</div>
<div class="a m" style="left:258px;top:548.5px;line-height:17px;color:#fff">33</div>
<div class="a" style="left:-2px;top:594.1px;width:355px;height:1px;background:#e6e6e6"></div>
<div class="a m" style="left:-5px;top:574.1px;line-height:17px;color:#000">HFD42-S1</div>
<div class="a m" style="left:157px;top:574.1px;line-height:17px;color:#000">8</div>
<div class="a m" style="left:258px;top:574.1px;line-height:17px;color:#000">33</div>
<div class="a" style="left:-2px;top:619.7px;width:355px;height:1px;background:#e6e6e6"></div>
<div class="a m" style="left:-5px;top:599.7px;line-height:17px;color:#000">HK19F-DC</div>
<div class="a m" style="left:157px;top:599.7px;line-height:17px;color:#000">8</div>
<div class="a m" style="left:258px;top:599.7px;line-height:17px;color:#000">38</div>
<div class="a" style="left:-2px;top:645.2px;width:355px;height:1px;background:#e6e6e6"></div>
<div class="a m" style="left:-5px;top:625.2px;line-height:17px;color:#000">HK4100F</div>
<div class="a m" style="left:157px;top:625.2px;line-height:17px;color:#000">6</div>
<div class="a m" style="left:258px;top:625.2px;line-height:17px;color:#000">24</div>
<div class="a m" style="left:-5px;top:650.8px;line-height:17px;color:#000">HRS1H</div>
<div class="a m" style="left:157px;top:650.8px;line-height:17px;color:#000">6</div>
<div class="a m" style="left:258px;top:650.8px;line-height:17px;color:#000">24</div>
<div class="a" style="left:153px;top:263px;width:1px;height:402px;background:rgba(0,0,0,0.08)"></div>
<div class="a" style="left:254px;top:263px;width:1px;height:402px;background:rgba(0,0,0,0.08)"></div>
<div class="a" style="left:352px;top:216px;width:27px;height:448px;background:#f0f0f0;border-left:1px solid #e0e0e0"></div>
<svg class="a" style="left:356px;top:221px" width="20" height="14"><path d="M4.5,10.5L10,5L15.5,10.5" stroke="#555" stroke-width="2.6" fill="none"/></svg>
<svg class="a" style="left:356px;top:643px" width="20" height="14"><path d="M4.5,4L10,9.5L15.5,4" stroke="#555" stroke-width="2.6" fill="none"/></svg>
<div class="a" style="left:355px;top:242px;width:22px;height:116px;background:#cdcdcd"></div>
<div class="a" style="left:134px;top:246px;width:0;height:0;border-left:5px solid transparent;border-right:5px solid transparent;border-bottom:10px solid #fff"></div>
<div class="a" style="left:-2px;top:675px;width:382px;height:148px;background:#f7f7f7;border:1px solid #aaaaaa"></div>
<div class="a" style="left:-2px;top:676px;width:355px;height:24px;background:#f0f0f0;border-bottom:2px solid #a9a9a9"></div>
<div class="a m" style="left:-1px;top:681px;line-height:17px">Component Primitives</div>
<div class="a" style="left:-2px;top:700px;width:355px;height:23px;background:#f0f0f0;border-bottom:2px solid #a9a9a9"></div>
<div class="a m" style="left:-1px;top:704px;line-height:17px">Type</div>
<div class="a" style="left:40px;top:703px;width:2px;height:19px;background:#a3a3a3"></div>
<div class="a m" style="left:45px;top:704px;line-height:17px">Name</div>
<div class="a" style="left:115px;top:703px;width:2px;height:19px;background:#a3a3a3"></div>
<div class="a m" style="left:120px;top:704px;line-height:17px">X-Size</div>
<div class="a" style="left:190px;top:703px;width:2px;height:19px;background:#a3a3a3"></div>
<div class="a m" style="left:195px;top:704px;line-height:17px">Y-Size</div>
<div class="a" style="left:265px;top:703px;width:2px;height:19px;background:#a3a3a3"></div>
<div class="a m" style="left:270px;top:704px;line-height:17px">Layer</div>
<div class="a" style="left:-2px;top:747.5px;width:355px;height:1px;background:#e6e6e6"></div>
<div class="a m" style="left:-5px;top:727.5px;line-height:17px;color:#000">Arc</div>
<div class="a m" style="left:44px;top:727.5px;line-height:17px;color:#000"></div>
<div class="a m" style="left:119px;top:727.5px;line-height:17px;color:#000">0. 05<span style="letter-spacing:-2px">mm</span></div>
<div class="a m" style="left:194px;top:727.5px;line-height:17px;color:#000"></div>
<div class="a m" style="left:269px;top:727.5px;line-height:17px;color:#000">Mechanica</div>
<div class="a" style="left:-2px;top:773.1px;width:355px;height:1px;background:#e6e6e6"></div>
<div class="a m" style="left:-5px;top:753.0px;line-height:17px;color:#000">Arc</div>
<div class="a m" style="left:44px;top:753.0px;line-height:17px;color:#000"></div>
<div class="a m" style="left:119px;top:753.0px;line-height:17px;color:#000">0. 254<span style="letter-spacing:-2px">mm</span></div>
<div class="a m" style="left:194px;top:753.0px;line-height:17px;color:#000"></div>
<div class="a m" style="left:269px;top:753.0px;line-height:17px;color:#000">TopOverla</div>
<div class="a" style="left:-2px;top:798.6px;width:355px;height:1px;background:#e6e6e6"></div>
<div class="a m" style="left:-5px;top:778.6px;line-height:17px;color:#000">Arc</div>
<div class="a m" style="left:44px;top:778.6px;line-height:17px;color:#000"></div>
<div class="a m" style="left:119px;top:778.6px;line-height:17px;color:#000">0. 254<span style="letter-spacing:-2px">mm</span></div>
<div class="a m" style="left:194px;top:778.6px;line-height:17px;color:#000"></div>
<div class="a m" style="left:269px;top:778.6px;line-height:17px;color:#000">TopOverla</div>
<div class="a m" style="left:-5px;top:804.1px;line-height:17px;color:#000">Arc</div>
<div class="a m" style="left:44px;top:804.1px;line-height:17px;color:#000"></div>
<div class="a m" style="left:119px;top:804.1px;line-height:17px;color:#000">0. 254<span style="letter-spacing:-2px">mm</span></div>
<div class="a m" style="left:194px;top:804.1px;line-height:17px;color:#000"></div>
<div class="a m" style="left:269px;top:804.1px;line-height:17px;color:#000">TopOverla</div>
<div class="a" style="left:41px;top:723px;width:1px;height:100px;background:rgba(0,0,0,0.08)"></div>
<div class="a" style="left:116px;top:723px;width:1px;height:100px;background:rgba(0,0,0,0.08)"></div>
<div class="a" style="left:191px;top:723px;width:1px;height:100px;background:rgba(0,0,0,0.08)"></div>
<div class="a" style="left:266px;top:723px;width:1px;height:100px;background:rgba(0,0,0,0.08)"></div>
<div class="a" style="left:352px;top:676px;width:27px;height:146px;background:#f0f0f0;border-left:1px solid #e0e0e0"></div>
<svg class="a" style="left:356px;top:681px" width="20" height="14"><path d="M4.5,10.5L10,5L15.5,10.5" stroke="#555" stroke-width="2.6" fill="none"/></svg>
<svg class="a" style="left:356px;top:801px" width="20" height="14"><path d="M4.5,4L10,9.5L15.5,4" stroke="#555" stroke-width="2.6" fill="none"/></svg>
<div class="a" style="left:355px;top:701px;width:22px;height:24px;background:#cdcdcd"></div>
<div class="a" style="left:95px;top:706px;width:0;height:0;border-left:5px solid transparent;border-right:5px solid transparent;border-bottom:10px solid #fff"></div>
<svg class="a" style="left:381px;top:674px" width="18" height="14"><path d="M3,10L9,4.5L15,10" stroke="#1a1a1a" stroke-width="2.6" fill="none"/></svg>
<svg class="a" style="left:381px;top:831px" width="18" height="14"><path d="M3,10L9,4.5L15,10" stroke="#1a1a1a" stroke-width="2.6" fill="none"/></svg>
<div class="a" style="left:0;top:833px;width:379px;height:72px;background:linear-gradient(#373737,#0a0a0a)"></div>
<svg class="a" style="left:120px;top:830px" width="140" height="80" viewBox="120 830 140 80"><g stroke="#f0f0f0" stroke-width="1.4" fill="none"><path d="M146,845.7H226M146,850H226M146,889.4H226M146,893.6H226M141.6,851V887M145.4,851V887M228.1,851V887M232.4,851V887"/></g><g fill="#f0f0f0"><rect x="134.4" y="838.9" width="12" height="12"/><rect x="226" y="838.9" width="12" height="12"/><rect x="134.4" y="886.8" width="12" height="12"/><rect x="226" y="886.8" width="12" height="12"/></g><g fill="#f00"><rect x="160" y="846.5" width="6" height="10"/><rect x="179.5" y="846.5" width="6" height="10"/><rect x="193" y="846.5" width="6" height="10"/><rect x="206.5" y="846.5" width="6" height="10"/><rect x="160" y="881" width="6" height="12"/><rect x="179.5" y="881" width="6" height="12"/><rect x="193" y="881" width="6" height="12"/><rect x="206.5" y="881" width="6" height="12"/></g><g stroke="#1a1a1a" stroke-width="1"><path d="M158,847.8H215M158,891.5H215"/></g><rect x="153.1" y="851.6" width="68.3" height="36.1" fill="none" stroke="#ffff00" stroke-width="1.5"/><path d="M163,858.5V861Q169,864 163,867Q169,870 163,873Q169,876 163,879M183.2,858.5V866.9H190.4L196.8,859.3M183.2,879V872.4H190.4L196.8,879M211.6,858.5V866.9H202.3M211.6,879V872.4H202.3" stroke="#ffff00" stroke-width="1.4" fill="none" stroke-linecap="round"/></svg>
<div class="a" style="left:0;top:919px;width:400px;height:24px;background:#d8d5d0"></div>
<svg class="a" style="left:0;top:917px" width="406" height="26"><path d="M29,2L37,25H120L128,2Z" fill="#f3f3f3" stroke="#8a8a8a" stroke-width="1"/><path d="M128,2L136,25H224L232,2Z" fill="#f3f3f3" stroke="#8a8a8a" stroke-width="1"/><path d="M354,2L362,25H406V2Z" fill="#f3f3f3" stroke="#8a8a8a" stroke-width="1"/><path d="M232,2L240,25H346L354,2" fill="none" stroke="#8a8a8a" stroke-width="1"/><path d="M9,8L15,13L9,18Z" fill="#111"/></svg>
<div class="a s" style="left:48px;top:921px;font-size:16.5px;line-height:20px;color:#1a1a4a">Projects</div>
<div class="a s" style="left:142px;top:921px;font-size:16.5px;line-height:20px;color:#1a1a4a">Navigator</div>
<div class="a s" style="left:244px;top:921px;font-size:16.5px;font-weight:bold;line-height:20px;color:#111">PCB Library</div>
<div class="a" style="left:0;top:917px;width:400px;height:26px;overflow:hidden"><div class="a s" style="left:369px;top:5px;font-size:14.6px;line-height:20px;color:#1a1a4a">PCB</div></div>
</body></html>
